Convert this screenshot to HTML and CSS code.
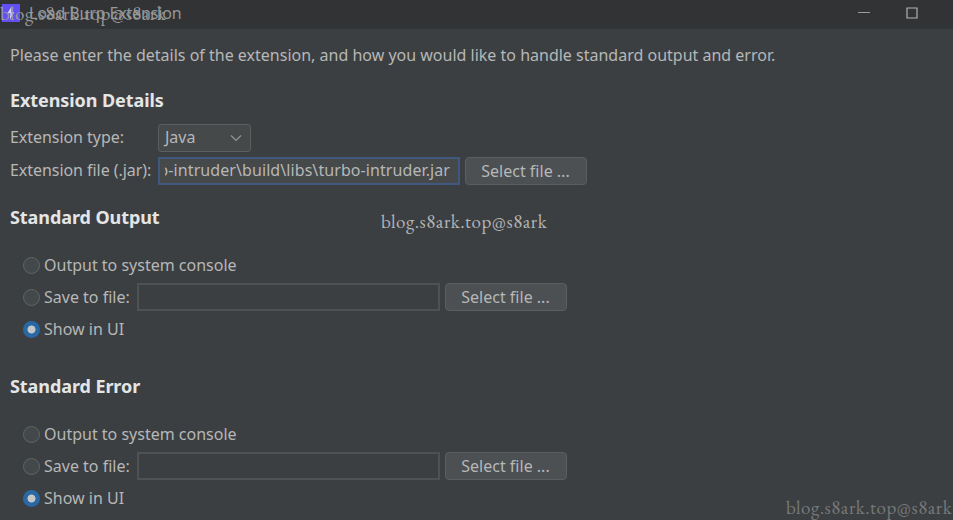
FILE: index.html
```html
<!DOCTYPE html>
<html lang="en">
<head>
<meta charset="utf-8">
<title>Load Burp Extension</title>
<link rel="stylesheet" href="styles.css">
</head>
<body>
<div class="window">
  <header class="titlebar">
    <svg class="logo" width="18" height="18" viewBox="0 0 18 18"><path fill="#6350f5" d="M0 0h18v18H0z"/><path fill="#dcd8fa" d="M9.5 2.5 5.5 9.3h3L7.8 16l4.4-7.7H9.3z"/></svg>
    <span class="title">Load Burp Extension</span>
    <span class="controls">
      <svg width="12" height="12" viewBox="0 0 12 12"><path d="M0 5.5h12" stroke="#999a9b"/></svg>
      <svg width="12" height="12" viewBox="0 0 12 12"><path d="M1 1h10v10H1z" fill="none" stroke="#b0b1b2" stroke-width="1.2"/></svg>
    </span>
  </header>
  <main class="content">
    <p class="intro">Please enter the details of the extension, and how you would like to handle standard output and error.</p>
    <section class="details">
      <h2>Extension Details</h2>
      <div class="row type-row">
        <span class="label">Extension type:</span>
        <div class="select"><span>Java</span><svg width="12" height="8" viewBox="0 0 12 8"><path d="m1 1.5 5 5 5-5" fill="none" stroke="#929596" stroke-width="1.2"/></svg></div>
      </div>
      <div class="row file-row">
        <span class="label">Extension file (.jar):</span>
        <div class="field focused"><div class="clip"><span class="path">o-intruder\build\libs\turbo-intruder.jar</span></div></div>
        <div class="button"><span>Select file ...</span></div>
      </div>
    </section>
    <section class="output">
      <h2>Standard Output</h2>
      <div class="options">
        <div class="option"><i class="radio"></i><span>Output to system console</span></div>
        <div class="option"><i class="radio"></i><span class="save">Save to file:</span><div class="field"></div><div class="button"><span>Select file ...</span></div></div>
        <div class="option"><i class="radio on"></i><span>Show in UI</span></div>
      </div>
    </section>
    <section class="error">
      <h2>Standard Error</h2>
      <div class="options">
        <div class="option"><i class="radio"></i><span>Output to system console</span></div>
        <div class="option"><i class="radio"></i><span class="save">Save to file:</span><div class="field"></div><div class="button"><span>Select file ...</span></div></div>
        <div class="option"><i class="radio on"></i><span>Show in UI</span></div>
      </div>
    </section>
  </main>
  <span class="mark mark-top">blog.s8ark.top@s8ark</span>
  <span class="mark mark-mid">blog.s8ark.top@s8ark</span>
  <span class="mark mark-end">blog.s8ark.top@s8ark</span>
</div>
</body>
</html>
```
FILE: styles.css
```css
* { box-sizing: border-box; }
body { margin: 0; }
.window {
  position: relative; width: 953px; height: 520px; overflow: hidden;
  background: #3c3f41; color: #b6b7b8;
  font: 16px/24px "Noto Sans", sans-serif; white-space: nowrap;
}
.titlebar { display: flex; align-items: center; height: 29px; padding: 0 35px 4px 2px; background: #313335; }
.title { margin-left: 9px; color: #969798; letter-spacing: -.15px; }
.controls { display: flex; gap: 36px; margin-left: auto; }
.content { padding: 14px 10px 0; }
.intro { margin: 0; height: 24px; }
h2 { margin: 0; font-size: 18px; line-height: 24px; font-weight: 700; color: #e4e5e6; letter-spacing: -.08px; }
.details { padding-top: 21px; }
.row { display: flex; height: 28px; align-items: center; }
.type-row { margin: 12px 0 5px; }
.label { width: 148px; letter-spacing: -.05px; padding-bottom: 2px; }
.select {
  display: flex; align-items: center; justify-content: space-between; width: 93px; height: 28px;
  padding: 0 8px 0 6px; border: 1px solid #5b5e5f; border-radius: 3px; background: #45494a;
}
.select > span { padding-bottom: 2px; }
.field { width: 303px; height: 28px; border: 2px solid #4f5253; }
.focused { width: 302px; padding: 0 8px 0 5px; border-color: #40587f; background: #45494a; }
.clip { display: flex; justify-content: flex-end; overflow: hidden; line-height: 22px; }
.path { letter-spacing: .08px; }
.button {
  display: flex; align-items: center; justify-content: center; width: 122px; height: 28px;
  margin-left: 5px; padding: 0 1px 1px 0; border: 1px solid #5b5e60; border-radius: 4px; background: #4c5052; line-height: 24px;
}
.output { padding-top: 20px; }
.error { padding-top: 29px; }
.options { padding: 20px 0 0 13px; }
.option { display: flex; align-items: center; height: 32px; }
.radio { width: 17px; height: 17px; margin-right: 4px; border: 1px solid #626566; border-radius: 50%; background: #43494a; }
.radio.on { border: 0; background: radial-gradient(circle, #c4c6c8 3.6px, #2869a5 4.4px); }
.save { width: 93px; }
.mark { position: absolute; font: 19px/24px "EB Garamond", Garamond, "Liberation Serif", serif; letter-spacing: .5px; color: #b3b4b5; }
.mark-top { left: 0; top: 2px; color: #98999a; }
.mark-mid { left: 381px; top: 210px; }
.mark-end { left: 786px; top: 496px; color: #76797a; }
```
